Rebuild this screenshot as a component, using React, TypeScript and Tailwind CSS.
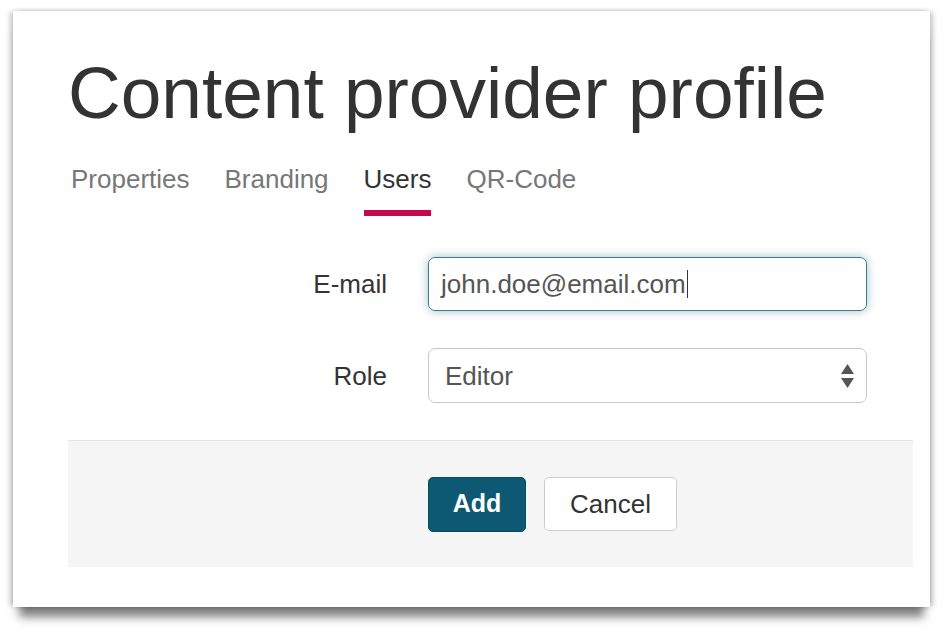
import React from 'react';

const tabs = ['Properties', 'Branding', 'Users', 'QR-Code'];

export default function App() {
  const active = 'Users';

  return (
    <div className="min-h-screen bg-white pl-[13px] pt-[11px] font-['Liberation_Sans',Arial,sans-serif]">
      {/* 카드 */}
      <div className="w-[917px] h-[596px] bg-white pl-[55px] pr-[17px] pt-[45px] shadow-[0_16px_9px_-6px_rgba(0,0,0,0.5),-4px_0_5px_-1px_rgba(0,0,0,0.22),4px_0_5px_-1px_rgba(0,0,0,0.22),0_-2px_4px_rgba(0,0,0,0.03)]">
        <h1 className="text-[73px] leading-none text-[#333]">Content provider profile</h1>

        {/* 탭 */}
        <div className="flex gap-[35px] mt-[37px] pl-[3px]">
          {tabs.map((t) => (
            <div
              key={t}
              className={
                t === active
                  ? 'text-[26px] leading-none text-[#333] pb-[18px] border-b-[6px] border-[#c8084a]'
                  : 'text-[26px] leading-none text-[#777] pb-[18px] border-b-[6px] border-transparent'
              }
            >
              {t}
            </div>
          ))}
        </div>

        {/* 폼 */}
        <div className="mt-[41px] flex flex-col gap-[37px]">
          <div className="flex items-center">
            <div className="w-[319px] text-right text-[26px] text-[#333] leading-none">E-mail</div>
            <div className="ml-[41px] w-[439px] h-[54px] rounded-[7px] border border-[#3f7b8e] shadow-[0_0_10px_rgba(60,130,155,0.5)] flex items-center pl-[12px]">
              <span className="text-[26px] text-[#555] leading-none">john.doe@email.com</span>
              <span className="ml-[1px] w-[1.5px] h-[28px] bg-[#333]"></span>
            </div>
          </div>
          <div className="flex items-center">
            <div className="w-[319px] text-right text-[26px] text-[#333] leading-none">Role</div>
            <div className="ml-[41px] w-[439px] h-[55px] rounded-[7px] border border-[#c8c8c8] flex items-center pl-[16px] pr-[12px]">
              <span className="flex-1 text-[26px] text-[#555] leading-none">Editor</span>
              <svg width="13" height="24" viewBox="0 0 13 24" fill="#555">
                <path d="M6.5 0 L13 10 L0 10 Z" />
                <path d="M0 14 L13 14 L6.5 24 Z" />
              </svg>
            </div>
          </div>
        </div>

        {/* 하단 버튼 영역 */}
        <div className="mt-[37px] border-t border-[#e3e3e3] bg-[#f5f5f5] h-[127px] flex items-center pl-[360px]">
          <button className="w-[98px] h-[55px] rounded-[5px] bg-[#0d5973] border border-[#0a4b61] text-white text-[25px] font-bold">
            Add
          </button>
          <button className="ml-[18px] w-[133px] h-[54px] rounded-[5px] bg-white border border-[#cccccc] text-[#333] text-[26px]">
            Cancel
          </button>
        </div>
      </div>
    </div>
  );
}
